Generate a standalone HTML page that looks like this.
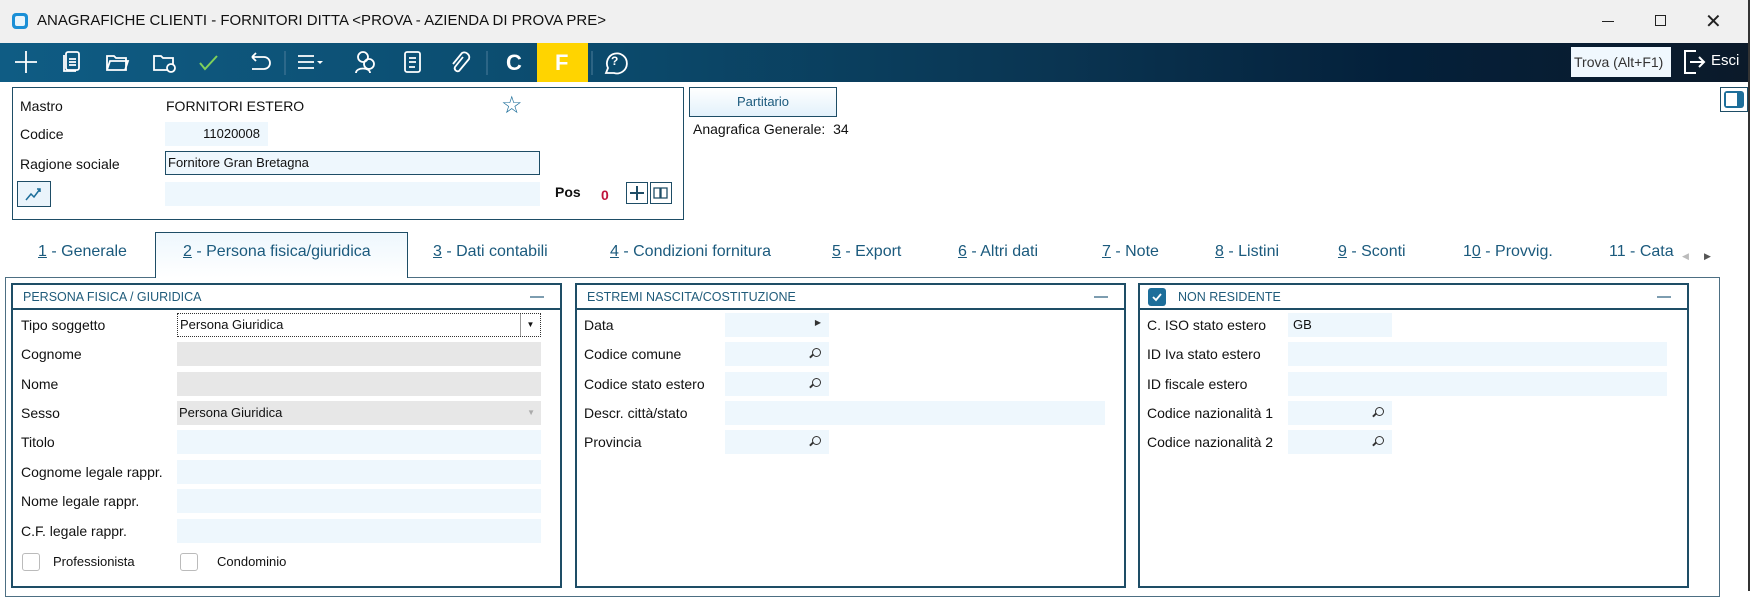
<!DOCTYPE html>
<html><head><meta charset="utf-8"><style>
*{box-sizing:border-box;margin:0;padding:0}
body{width:1750px;height:591px;overflow:hidden;background:#fff;font-family:"Liberation Sans",sans-serif;position:relative;color:#111}
.a{position:absolute}
.t{font-size:14px;white-space:nowrap}
.f{position:absolute;background:#eef7fd;height:24px}
.g{background:#e7e7e7}
.lbl{position:absolute;font-size:14px;white-space:nowrap;line-height:24px}
.hdr{position:absolute;left:0;right:0;top:0;height:25px;border-bottom:2px solid #1e4d66;font-size:12.5px;color:#1f5b7a;line-height:24px;padding-left:10px}
.panel{position:absolute;top:283px;height:305px;border:2px solid #1e4d66;background:#fff}
.dash{position:absolute;right:16px;top:11px;width:14px;height:2px;background:#7d9db0}
.tab{position:absolute;top:243px;font-size:16px;color:#1b5a7d;white-space:nowrap}
.tab u{text-decoration:underline}
.ic{position:absolute;top:48px}
.mag{position:absolute;right:8px;top:6px;width:9px;height:9px;border:1.5px solid #333;border-radius:50%}
.mag:after{content:"";position:absolute;left:-4px;top:6px;width:5px;height:1.5px;background:#333;transform:rotate(-45deg)}
</style></head><body>
<!-- title bar -->
<div class="a" style="left:0;top:0;width:1750px;height:43px;background:#f0f0f0"></div>
<div class="a" style="left:12px;top:13px;width:16px;height:16px;background:#1a8fd6;border-radius:4px"></div>
<div class="a" style="left:15px;top:16px;width:10px;height:10px;background:#fff;border-radius:2px;opacity:.9"></div>
<div class="a t" style="left:37px;top:12px;font-size:15px;color:#111">ANAGRAFICHE CLIENTI - FORNITORI DITTA &lt;PROVA - AZIENDA DI PROVA PRE&gt;</div>
<div class="a" style="left:1602px;top:21px;width:12px;height:1px;background:#222"></div>
<div class="a" style="left:1655px;top:15px;width:11px;height:11px;border:1px solid #222"></div>
<div class="a t" style="left:1705px;top:9px;font-size:20px;color:#222">✕</div>
<!-- toolbar -->
<div class="a" style="left:0;top:43px;width:1748px;height:39px;background:linear-gradient(90deg,#0f5c84 0%,#0b4a6c 35%,#0a3552 60%,#04203a 80%,#0b1a2a 100%)"></div>
<svg class="a" style="left:0;top:43px" width="680" height="39" fill="none" stroke="#fff" stroke-width="1.8">
<path d="M15 19h22M26 8v22"/>
<rect x="66" y="9" width="13" height="18" rx="2"/><path d="M64 12v16h12M69 16h7M69 19h7M69 22h7"/>
<path d="M107 13h7l2 2h10v12h-19zM107 27l3-9h18l-3 9"/>
<path d="M154 13h7l2 2h10v12h-19z"/><circle cx="171" cy="25" r="4" fill="#0c5277"/>
<path d="M200 20l5 6 12-13" stroke="#7fd15a" stroke-width="2"/>
<path d="M252 14h12a6 6 0 010 12h-12M252 14l4-4M252 14l4 4"/>
<path d="M285 8v24" stroke="#4c7d9a" stroke-width="1"/>
<path d="M298 13h16M298 19h16M298 25h16"/><path d="M317 18h6l-3 3z" fill="#fff" stroke="none"/>
<circle cx="363" cy="14" r="5"/><circle cx="369" cy="21" r="5"/><path d="M356 30c0-6 14-6 14 0"/>
<rect x="405" y="9" width="15" height="20" rx="2"/><path d="M409 15h7M409 19h7M409 24h6"/>
<path d="M463 14l-8 10a3 3 0 004 4l10-12a5 5 0 00-7-6l-9 11"/>
<path d="M487 8v24" stroke="#4c7d9a" stroke-width="1"/>
<path d="M592 8v24" stroke="#4c7d9a" stroke-width="1"/>
<path d="M606 30l2-5a10 10 0 116 5z"/>
</svg>
<div class="a" style="left:537px;top:43px;width:51px;height:39px;background:#ffd400"></div>
<div class="a" style="left:506px;top:50px;font-size:22px;font-weight:bold;color:#fff">C</div>
<div class="a" style="left:555px;top:50px;font-size:22px;font-weight:bold;color:#fff">F</div>
<div class="a" style="left:611px;top:54px;font-size:12px;font-weight:bold;color:#fff">?</div>
<div class="a t" style="left:1571px;top:47px;width:100px;height:30px;background:#f0f8fe;color:#333;line-height:30px;padding-left:3px">Trova (Alt+F1)</div>
<svg class="a" style="left:1682px;top:48px" width="26" height="28" fill="none" stroke="#fff" stroke-width="2"><path d="M14 3H3v22h11M8 14h14M17 9l5 5-5 5"/></svg>
<div class="a t" style="left:1711px;top:52px;color:#fff;font-size:15px">Esci</div>
<div class="a" style="left:1748px;top:0;width:2px;height:591px;background:#333"></div>
<!-- top box -->
<div class="a" style="left:12px;top:87px;width:672px;height:133px;border:1.5px solid #1e4d66"></div>
<div class="a t" style="left:20px;top:98px">Mastro</div>
<div class="a t" style="left:166px;top:98px">FORNITORI ESTERO</div>
<div class="a" style="left:501px;top:91px;font-size:24px;color:#1d6e9a">☆</div>
<div class="a t" style="left:20px;top:126px">Codice</div>
<div class="f" style="left:165px;top:122px;width:103px;font-size:13px;text-align:right;padding-right:8px;line-height:24px">11020008</div>
<div class="a t" style="left:20px;top:156px">Ragione sociale</div>
<div class="f" style="left:165px;top:151px;width:375px;border:1.5px solid #1e4d66;font-size:13px;line-height:21px;padding-left:2px">Fornitore Gran Bretagna</div>
<div class="a" style="left:17px;top:181px;width:34px;height:26px;border:1.5px solid #1e4d66;background:#eaf4fb"></div>
<svg class="a" style="left:24px;top:186px" width="20" height="16" fill="none" stroke="#1d6e9a" stroke-width="1.5"><path d="M2 14l5-6 3 3 6-8M13 3h3v3"/></svg>
<div class="f" style="left:165px;top:182px;width:375px"></div>
<div class="a t" style="left:555px;top:184px;font-weight:bold">Pos</div>
<div class="a t" style="left:601px;top:187px;color:#c0143c;font-weight:bold">0</div>
<div class="a" style="left:626px;top:182px;width:22px;height:22px;border:1.5px solid #1e4d66"></div>
<div class="a" style="left:630px;top:192px;width:14px;height:1.5px;background:#1e4d66"></div>
<div class="a" style="left:636px;top:186px;width:1.5px;height:14px;background:#1e4d66"></div>
<div class="a" style="left:650px;top:182px;width:22px;height:22px;border:1.5px solid #1e4d66"></div>
<svg class="a" style="left:652px;top:186px" width="18" height="14" fill="none" stroke="#1e4d66" stroke-width="1.3"><path d="M2 2h6v10H2zM9 2h6v10H9z"/></svg>
<div class="a" style="left:689px;top:87px;width:148px;height:30px;border:1.5px solid #1e4d66;background:linear-gradient(#fff,#e3f1fb);color:#1b5a7d;font-size:13px;text-align:center;line-height:28px">Partitario</div>
<div class="a t" style="left:693px;top:121px">Anagrafica Generale:&nbsp; 34</div>
<div class="a" style="left:1720px;top:87px;width:28px;height:25px;border:1.5px solid #1e4d66"></div>
<div class="a" style="left:1724px;top:91px;width:20px;height:17px;border-radius:3px;background:#1d6e9a"></div>
<div class="a" style="left:1726px;top:93px;width:11px;height:13px;background:#fff"></div>
<!-- tabs -->
<div class="a" style="left:155px;top:232px;width:253px;height:46px;border:1.5px solid #1e4d66;border-bottom:none;background:linear-gradient(#eef7fd,#fff);z-index:2"></div>
<div class="a" style="left:5px;top:277px;width:1715px;height:320px;border:1.5px solid #4d6f83"></div>
<div class="tab" style="left:38px"><u>1</u> - Generale</div>
<div class="tab" style="left:183px;z-index:3"><u>2</u> - Persona fisica/giuridica</div>
<div class="tab" style="left:433px"><u>3</u> - Dati contabili</div>
<div class="tab" style="left:610px"><u>4</u> - Condizioni fornitura</div>
<div class="tab" style="left:832px"><u>5</u> - Export</div>
<div class="tab" style="left:958px"><u>6</u> - Altri dati</div>
<div class="tab" style="left:1102px"><u>7</u> - Note</div>
<div class="tab" style="left:1215px"><u>8</u> - Listini</div>
<div class="tab" style="left:1338px"><u>9</u> - Sconti</div>
<div class="tab" style="left:1463px">1<u>0</u> - Provvig.</div>
<div class="tab" style="left:1609px;width:65px;overflow:hidden">11 - Catalogo</div>
<div class="a" style="left:1682px;top:251px;font-size:9px;color:#bbb">◀</div>
<div class="a" style="left:1704px;top:251px;font-size:9px;color:#555">▶</div>
<!-- left panel -->
<div class="panel" style="left:11px;width:551px">
<div class="hdr">PERSONA FISICA / GIURIDICA<div class="dash"></div></div>
<div class="lbl" style="left:8px;top:28px">Tipo soggetto</div>
<div class="f" style="left:164px;top:28px;width:364px;background:#fff;border:1px dotted #333;font-size:13px;line-height:22px;padding-left:2px">Persona Giuridica<span style="position:absolute;right:0;top:0;width:20px;height:22px;border-left:1px solid #999;font-size:8px;text-align:center">▼</span></div>
<div class="lbl" style="left:8px;top:57px">Cognome</div><div class="f g" style="left:164px;top:57px;width:364px"></div>
<div class="lbl" style="left:8px;top:87px">Nome</div><div class="f g" style="left:164px;top:87px;width:364px"></div>
<div class="lbl" style="left:8px;top:116px">Sesso</div><div class="f g" style="left:164px;top:116px;width:364px;font-size:13px;line-height:24px;padding-left:2px">Persona Giuridica<span style="position:absolute;right:6px;font-size:8px;color:#aaa">▼</span></div>
<div class="lbl" style="left:8px;top:145px">Titolo</div><div class="f" style="left:164px;top:145px;width:364px"></div>
<div class="lbl" style="left:8px;top:175px">Cognome legale rappr.</div><div class="f" style="left:164px;top:175px;width:364px"></div>
<div class="lbl" style="left:8px;top:204px">Nome legale rappr.</div><div class="f" style="left:164px;top:204px;width:364px"></div>
<div class="lbl" style="left:8px;top:234px">C.F. legale rappr.</div><div class="f" style="left:164px;top:234px;width:364px"></div>
<div class="a" style="left:9px;top:268px;width:18px;height:18px;border:1.5px solid #bbb;border-radius:3px"></div>
<div class="lbl" style="left:40px;top:265px;font-size:13px">Professionista</div>
<div class="a" style="left:167px;top:268px;width:18px;height:18px;border:1.5px solid #bbb;border-radius:3px"></div>
<div class="lbl" style="left:204px;top:265px;font-size:13px">Condominio</div>
</div>
<!-- mid panel -->
<div class="panel" style="left:575px;width:551px">
<div class="hdr">ESTREMI NASCITA/COSTITUZIONE<div class="dash"></div></div>
<div class="lbl" style="left:7px;top:28px">Data</div><div class="f" style="left:148px;top:28px;width:104px"><span style="position:absolute;right:8px;top:5px;font-size:8px;color:#333">▶</span></div>
<div class="lbl" style="left:7px;top:57px">Codice comune</div><div class="f" style="left:148px;top:57px;width:104px"><div class="mag"></div></div>
<div class="lbl" style="left:7px;top:87px">Codice stato estero</div><div class="f" style="left:148px;top:87px;width:104px"><div class="mag"></div></div>
<div class="lbl" style="left:7px;top:116px">Descr. città/stato</div><div class="f" style="left:148px;top:116px;width:380px"></div>
<div class="lbl" style="left:7px;top:145px">Provincia</div><div class="f" style="left:148px;top:145px;width:104px"><div class="mag"></div></div>
</div>
<!-- right panel -->
<div class="panel" style="left:1138px;width:551px">
<div class="hdr" style="padding-left:38px">NON RESIDENTE<div class="dash"></div></div>
<div class="a" style="left:8px;top:3px;width:18px;height:18px;border-radius:3px;background:#1d6e9a"></div>
<svg class="a" style="left:10px;top:5px" width="14" height="14" fill="none" stroke="#fff" stroke-width="1.8"><path d="M3 7l3 3 5-6"/></svg>
<div class="lbl" style="left:7px;top:28px">C. ISO stato estero</div><div class="f" style="left:148px;top:28px;width:104px;font-size:13px;line-height:24px;padding-left:5px">GB</div>
<div class="lbl" style="left:7px;top:57px">ID Iva stato estero</div><div class="f" style="left:148px;top:57px;width:379px"></div>
<div class="lbl" style="left:7px;top:87px">ID fiscale estero</div><div class="f" style="left:148px;top:87px;width:379px"></div>
<div class="lbl" style="left:7px;top:116px">Codice nazionalità 1</div><div class="f" style="left:148px;top:116px;width:104px"><div class="mag"></div></div>
<div class="lbl" style="left:7px;top:145px">Codice nazionalità 2</div><div class="f" style="left:148px;top:145px;width:104px"><div class="mag"></div></div>
</div>
</body></html>
